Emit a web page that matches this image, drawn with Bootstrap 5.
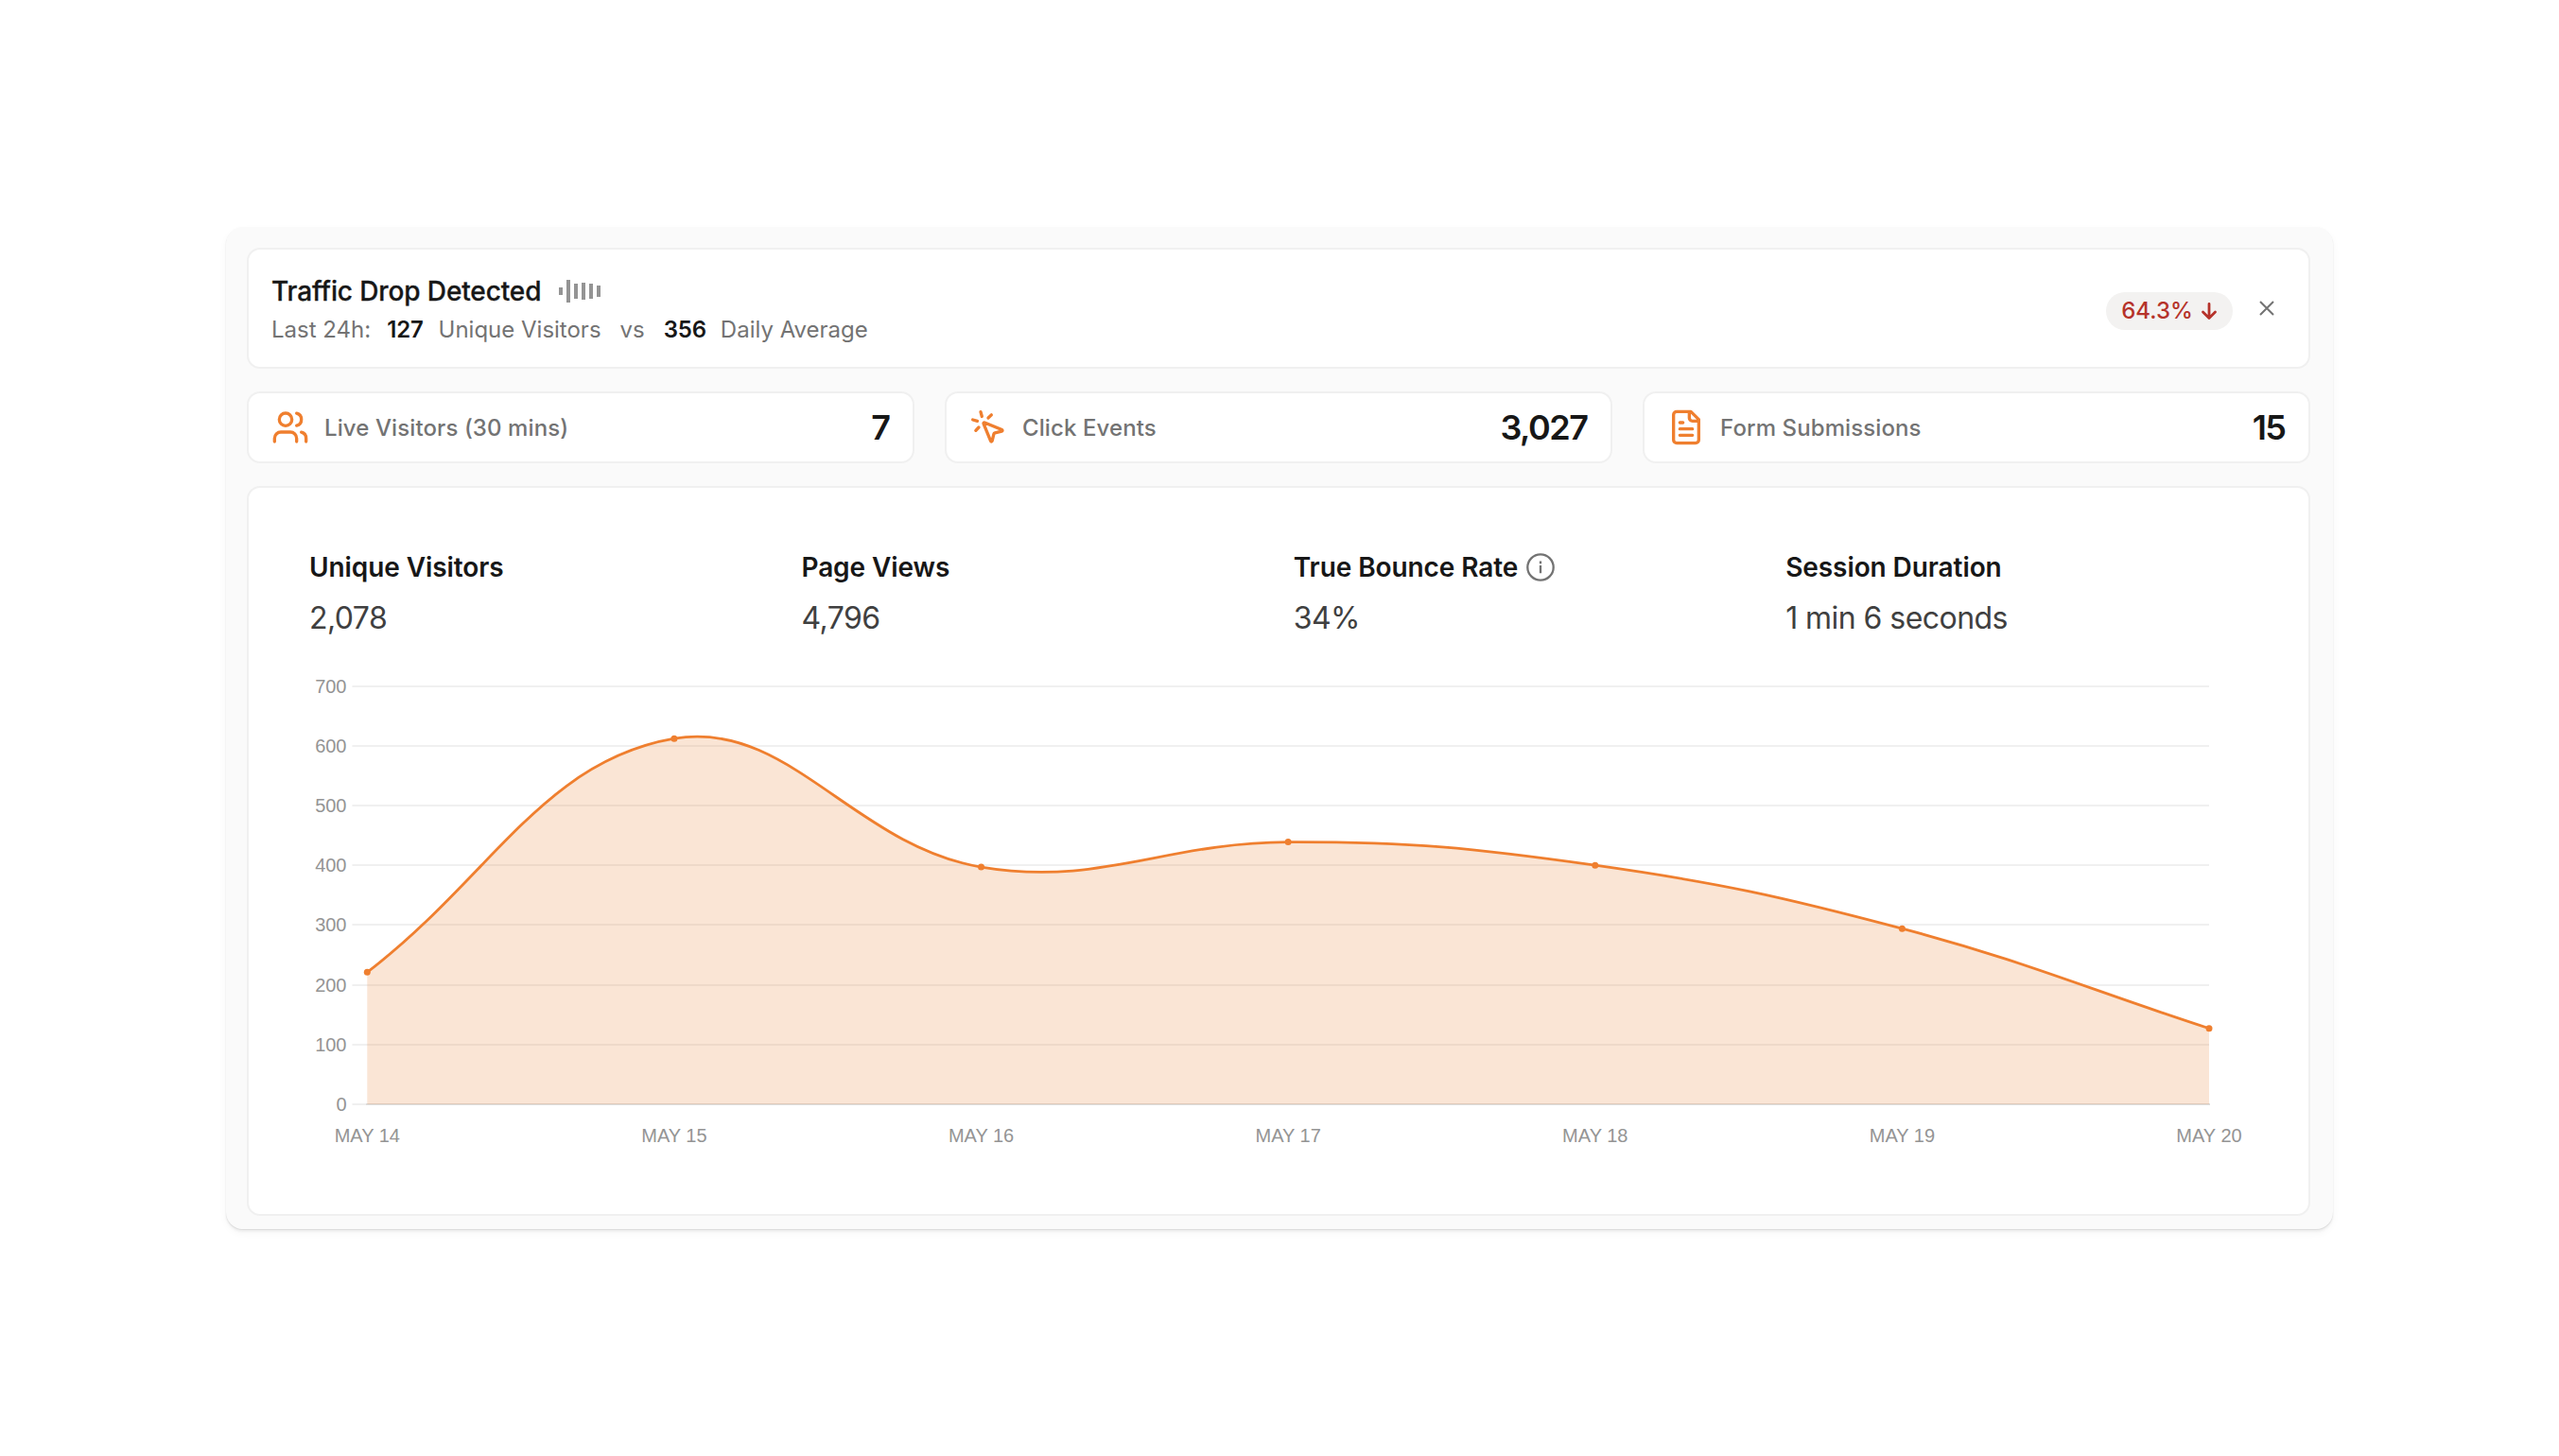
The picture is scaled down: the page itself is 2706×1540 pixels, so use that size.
<!DOCTYPE html>
<html lang="en">
<head>
<meta charset="utf-8">
<title>Traffic overview</title>
<meta name="viewport" content="width=device-width, initial-scale=1">
<link href="https://cdn.jsdelivr.net/npm/bootstrap@5.3.0/dist/css/bootstrap.min.css" rel="stylesheet">
<style>
  body { font-family: Inter, "Liberation Sans", sans-serif; color: #171717; background: #fff; padding: 240px 239px; line-height: 1; }
  .panel { background: #fafafa; border-radius: 18px; padding: 22px 24px 14px 23px; margin-left: 0; height: 1060px; box-shadow: 0 1px 1px #dadada, 0 3px 2px #f0f0f0, 0 4px 8px rgba(0,0,0,.04); }
  .panel { padding-left: 22px; }
  .tile { background: #fff; border: 2px solid #f0f0f0; border-radius: 14px; }
  .alert-tile { height: 128px; padding: 4px 36px 0 24px; }
  .alert-title { font-size: 28px; font-weight: 500; line-height: 40px; letter-spacing: -.12px; -webkit-text-stroke: .3px; }
  .alert-bars { margin-left: 19px; }
  .alert-text { font-size: 24px; line-height: 41px; color: #737373; }
  .alert-text b { color: #171717; font-weight: 600; letter-spacing: -.2px; }
  .gap-a { margin: 0 16px 0 17px; }
  .gap-b { margin: 0 20px; }
  .gap-c { margin-right: 15px; }
  .drop-pill { background: #f3f2f1; color: #b5322a; font-size: 24px; font-weight: 500; width: 134px; height: 40px; margin-top: 2px; }
  .close-x { margin: -4px 0 0 28px; }
  .stats { gap: 32px; margin: 24px 0; }
  .stat { height: 76px; padding: 0 24.5px 0 24px; flex: 1 1 0; }
  .stat-name { font-size: 24px; font-weight: 500; color: #737373; letter-spacing: .1px; padding-top: 1px; }
  .stat-value { font-size: 36px; font-weight: 600; letter-spacing: -1.5px; }
  .ico { fill: none; stroke: #ef7f2f; stroke-width: 2; stroke-linecap: round; stroke-linejoin: round; }
  .chart-tile { height: 772px; padding-top: 63px; }
  .metrics { padding-left: 64px; }
  .metric { width: 520.4px; }
  .metric-name { font-size: 28px; font-weight: 600; line-height: 42px; height: 42px; letter-spacing: -.08px; }
  .metric-value { font-size: 32px; line-height: 48px; margin-top: 9px; color: #404040; letter-spacing: -.55px; }
  .chart text { font: 20px "Liberation Sans", Arial, sans-serif; fill: #949494; }
</style>
<script src="https://cdn.jsdelivr.net/npm/bootstrap@5.3.0/dist/js/bootstrap.bundle.min.js"></script>
</head>
<body>
<main class="panel">
  <section class="tile alert-tile d-flex align-items-center">
    <div class="flex-grow-1">
      <div class="alert-title d-flex align-items-center"><span>Traffic Drop Detected</span>
        <svg class="alert-bars" width="44" height="24" viewBox="0 0 44 24" fill="#949494"><path d="M0 8h4v8H0zM8 0h4v24H8zM16 4h4v16h-4zM24 3h4v18h-4zM32 4h4v16h-4zM40 6h4v12h-4z"/></svg>
      </div>
      <div class="alert-text d-flex"><span>Last 24h:</span><b class="gap-a">127</b><span>Unique Visitors</span><span class="gap-b">vs</span><b class="gap-c">356</b><span>Daily Average</span></div>
    </div>
    <div class="drop-pill rounded-pill d-flex align-items-center justify-content-center"><span>64.3%</span>
      <svg class="ms-2" width="18" height="20" viewBox="0 0 18 20" fill="none" stroke="#b5322a" stroke-width="2.800" stroke-linecap="round" stroke-linejoin="round"><path d="M9 2.500v15M2.500 11l6.500 6.500 6.500-6.500"/></svg>
    </div>
    <svg class="close-x" width="16" height="16" viewBox="0 0 16 16" stroke="#737373" stroke-width="2"><path d="M1 1l14 14M15 1L1 15"/></svg>
  </section>

  <section class="stats d-flex">
    <div class="tile stat d-flex align-items-center">
      <svg class="ico" width="40" height="40" viewBox="0 0 24 24"><path d="M16 21v-2a4 4 0 0 0-4-4H6a4 4 0 0 0-4 4v2"/><circle cx="9" cy="7" r="4"/><path d="M22 21v-2a4 4 0 0 0-3-3.870M16 3.130a4 4 0 0 1 0 7.750"/></svg>
      <span class="stat-name ms-3">Live Visitors (30 mins)</span><span class="stat-value ms-auto">7</span>
    </div>
    <div class="tile stat d-flex align-items-center">
      <svg class="ico" width="40" height="40" viewBox="0 0 24 24"><path d="M14 4.100 12 6M5.100 8l-2.900-.8M6 12l-1.900 2M7.200 2.200 8 5.100M9.037 9.690a.498.498 0 0 1 .653-.653l11 4.500a.5.5 0 0 1-.074.949l-4.349 1.041a1 1 0 0 0-.74.739l-1.040 4.350a.5.5 0 0 1-.950.074z"/></svg>
      <span class="stat-name ms-3">Click Events</span><span class="stat-value ms-auto">3,027</span>
    </div>
    <div class="tile stat d-flex align-items-center">
      <svg class="ico" width="40" height="40" viewBox="0 0 24 24"><path d="M15 2H6a2 2 0 0 0-2 2v16a2 2 0 0 0 2 2h12a2 2 0 0 0 2-2V7zM14 2v4a2 2 0 0 0 2 2h4M10 9H8M16 13H8M16 17H8"/></svg>
      <span class="stat-name ms-3">Form Submissions</span><span class="stat-value ms-auto">15</span>
    </div>
  </section>

  <section class="tile chart-tile">
    <div class="metrics d-flex">
      <div class="metric"><div class="metric-name">Unique Visitors</div><div class="metric-value">2,078</div></div>
      <div class="metric"><div class="metric-name">Page Views</div><div class="metric-value">4,796</div></div>
      <div class="metric"><div class="metric-name d-flex align-items-center">True Bounce Rate
        <svg class="ms-2" width="32" height="32" viewBox="0 0 32 32" fill="none" stroke="#737373" stroke-width="2.300"><circle cx="16" cy="16" r="13.700"/><path d="M16 14v8.300M16 9.500v2.700"/></svg></div><div class="metric-value">34%</div></div>
      <div class="metric"><div class="metric-name">Session Duration</div><div class="metric-value">1 min 6 seconds</div></div>
    </div>
    <svg class="chart d-block" id="chart" width="2177" height="560" viewBox="263 678 2177 560"></svg>
  </section>
</main>
<script>
  const values = [221, 612, 397, 439, 400, 294, 127];
  const left = 388.3, right = 2336, zero = 1168, unit = 0.632;
  const step = (right - left) / (values.length - 1);
  const pts = values.map((v, i) => ({ x: left + i * step, y: zero - v * unit }));
  // Cardinal spline handles, tension 0.4
  const handles = pts.map((p, i) => {
    const a = pts[i - 1] || p, b = pts[i + 1] || p;
    const d1 = Math.hypot(p.x - a.x, p.y - a.y), d2 = Math.hypot(b.x - p.x, b.y - p.y);
    const f1 = 0.4 * d1 / (d1 + d2), f2 = 0.4 * d2 / (d1 + d2);
    return { in: [p.x - f1 * (b.x - a.x), p.y - f1 * (b.y - a.y)], out: [p.x + f2 * (b.x - a.x), p.y + f2 * (b.y - a.y)] };
  });
  let line = `M${pts[0].x} ${pts[0].y}`;
  for (let i = 1; i < pts.length; i++) line += `C${handles[i - 1].out} ${handles[i].in} ${pts[i].x} ${pts[i].y}`;
  let out = '';
  for (let v = 0; v <= 700; v += 100) {
    const y = Math.round(zero - v * unit);
    out += `<path d="M372.500 ${y}H2336" stroke="#f0f0f0" stroke-width="2"/><text x="366.500" y="${y + 6.5}" text-anchor="end">${v}</text>`;
  }
  out += `<path d="M387 1168H2337" stroke="#dedede" stroke-width="2"/>`;
  out += `<path d="${line}V1168H${left}Z" fill="#e67d2f" fill-opacity=".2"/>`;
  out += `<path d="${line}" fill="none" stroke="#ef7f2f" stroke-width="2.800"/>`;
  pts.forEach((p, i) => out += `<circle cx="${p.x}" cy="${p.y}" r="3.500" fill="#ef7f2f"/><text x="${p.x}" y="1208" text-anchor="middle">MAY ${14 + i}</text>`);
  document.getElementById('chart').innerHTML = out;
</script>
</body>
</html>
